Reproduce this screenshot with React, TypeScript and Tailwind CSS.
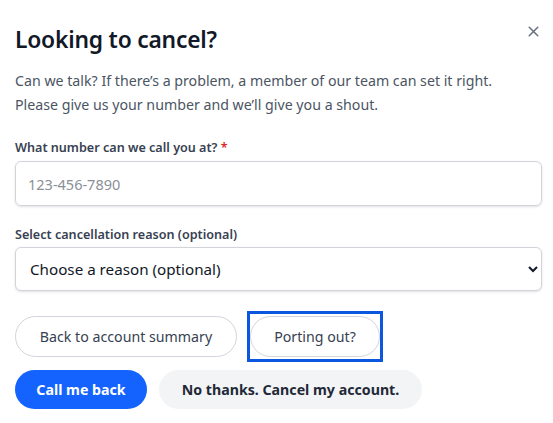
import { X } from "lucide-react";

// Cancel modal
const App = () => {
	return (
		<div className="w-[553px] h-[423px] bg-white px-[15px] pt-[24px] font-['Noto_Sans',sans-serif] text-[#111827]">
			<div className="flex items-start justify-between">
				<h1 className="text-[22.8px] leading-[32px] font-semibold text-[#111827] tracking-[-0.2px]">Looking to cancel?</h1>
				<button className="-mt-[1px] -mr-[4px] text-[#6b7280]">
					<X className="w-[17px] h-[17px]" strokeWidth={2.2} />
				</button>
			</div>

			<p className="mt-[13px] text-[14.2px] leading-[24px] text-[#4b5563]">
				Can we talk? If there’s a problem, a member of our team can set it right.
				<br />
				Please give us your number and we’ll give you a shout.
			</p>

			<label className="mt-[22px] block text-[12.6px] leading-[18px] font-semibold text-[#374151]">
				What number can we call you at? <span className="text-[#dc2626]">*</span>
			</label>
			<input
				type="tel"
				placeholder="123-456-7890"
				className="mt-[4px] block w-[527px] h-[45px] rounded-[6px] border border-[#d1d5db] px-[12px] text-[14.5px] shadow-sm placeholder:text-[#8a8f98] outline-none"
			/>

			<label className="mt-[20px] block text-[12.6px] leading-[18px] font-semibold text-[#374151]">
				Select cancellation reason (optional)
			</label>
			<select className="mt-[3px] block w-[527px] h-[44px] rounded-[6px] border border-[#d1d5db] px-[10px] text-[15.2px] text-[#111827] bg-white shadow-sm outline-none">
				<option>Choose a reason (optional)</option>
			</select>

			<div className="mt-[20px] flex items-center gap-[10px]">
				<button className="w-[222px] h-[41px] rounded-full border border-[#d1d5db] text-[14.2px] text-[#374151] bg-white">
					Back to account summary
				</button>
				<div className="py-[2px] border-[3px] border-[#0b57e0]">
					<button className="block w-[130px] h-[41px] rounded-full border border-[#d1d5db] text-[14.2px] text-[#374151] bg-white">
						Porting out?
					</button>
				</div>
			</div>

			<div className="mt-[8px] flex items-center gap-[12px]">
				<button className="w-[132px] h-[39px] rounded-full bg-[#1463ff] text-white text-[14.2px] font-bold">
					Call me back
				</button>
				<button className="w-[263px] h-[39px] rounded-full bg-[#f3f4f6] text-[#1f2937] text-[14.2px] font-bold">
					No thanks. Cancel my account.
				</button>
			</div>
		</div>
	);
};

export default App;
